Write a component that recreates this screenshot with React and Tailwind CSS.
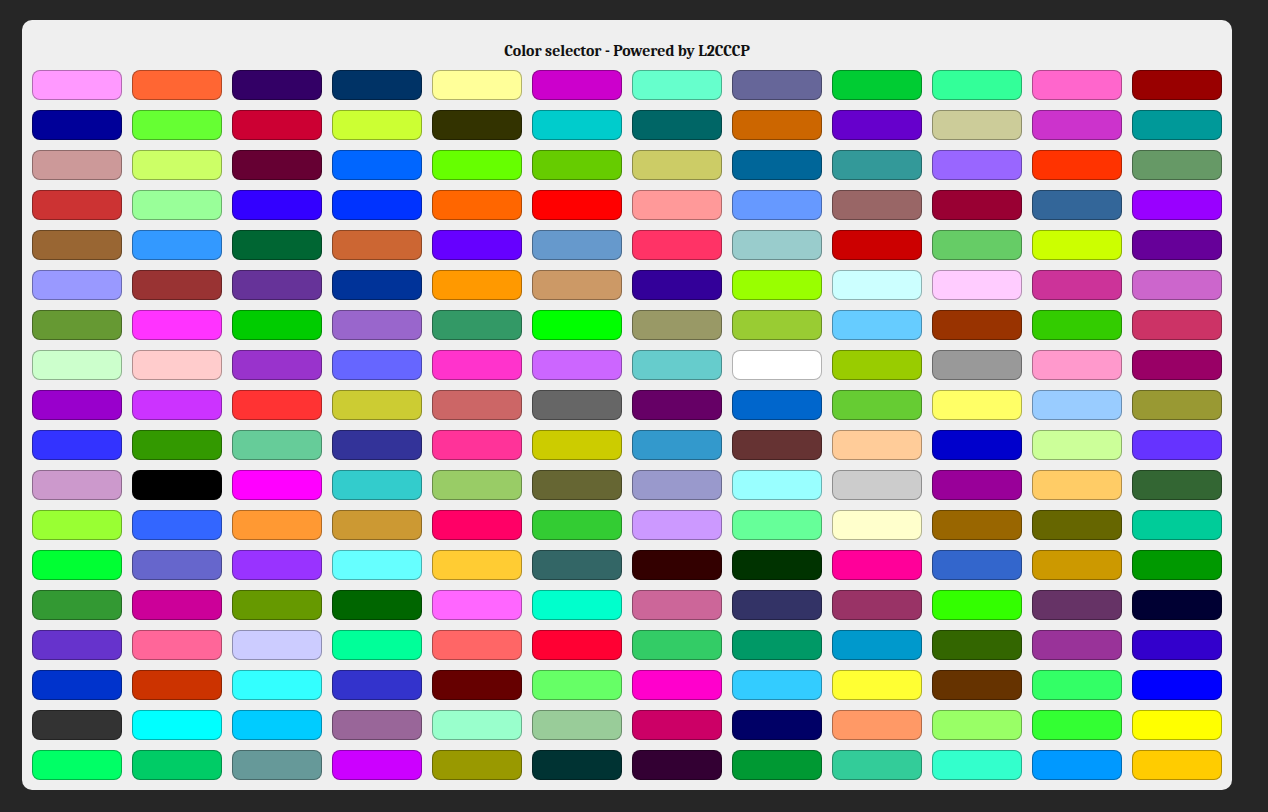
import React from 'react'

// 216 web-safe colours, in the order the selector lays them out
const COLORS = [
  '#ff99ff', '#ff6633', '#330066', '#003366', '#ffff99', '#cc00cc', '#66ffcc', '#666699', '#00cc33', '#33ff99', '#ff66cc', '#990000',
  '#000099', '#66ff33', '#cc0033', '#ccff33', '#333300', '#00cccc', '#006666', '#cc6600', '#6600cc', '#cccc99', '#cc33cc', '#009999',
  '#cc9999', '#ccff66', '#660033', '#0066ff', '#66ff00', '#66cc00', '#cccc66', '#006699', '#339999', '#9966ff', '#ff3300', '#669966',
  '#cc3333', '#99ff99', '#3300ff', '#0033ff', '#ff6600', '#ff0000', '#ff9999', '#6699ff', '#996666', '#990033', '#336699', '#9900ff',
  '#996633', '#3399ff', '#006633', '#cc6633', '#6600ff', '#6699cc', '#ff3366', '#99cccc', '#cc0000', '#66cc66', '#ccff00', '#660099',
  '#9999ff', '#993333', '#663399', '#003399', '#ff9900', '#cc9966', '#330099', '#99ff00', '#ccffff', '#ffccff', '#cc3399', '#cc66cc',
  '#669933', '#ff33ff', '#00cc00', '#9966cc', '#339966', '#00ff00', '#999966', '#99cc33', '#66ccff', '#993300', '#33cc00', '#cc3366',
  '#ccffcc', '#ffcccc', '#9933cc', '#6666ff', '#ff33cc', '#cc66ff', '#66cccc', '#ffffff', '#99cc00', '#999999', '#ff99cc', '#990066',
  '#9900cc', '#cc33ff', '#ff3333', '#cccc33', '#cc6666', '#666666', '#660066', '#0066cc', '#66cc33', '#ffff66', '#99ccff', '#999933',
  '#3333ff', '#339900', '#66cc99', '#333399', '#ff3399', '#cccc00', '#3399cc', '#663333', '#ffcc99', '#0000cc', '#ccff99', '#6633ff',
  '#cc99cc', '#000000', '#ff00ff', '#33cccc', '#99cc66', '#666633', '#9999cc', '#99ffff', '#cccccc', '#990099', '#ffcc66', '#336633',
  '#99ff33', '#3366ff', '#ff9933', '#cc9933', '#ff0066', '#33cc33', '#cc99ff', '#66ff99', '#ffffcc', '#996600', '#666600', '#00cc99',
  '#00ff33', '#6666cc', '#9933ff', '#66ffff', '#ffcc33', '#336666', '#330000', '#003300', '#ff0099', '#3366cc', '#cc9900', '#009900',
  '#339933', '#cc0099', '#669900', '#006600', '#ff66ff', '#00ffcc', '#cc6699', '#333366', '#993366', '#33ff00', '#663366', '#000033',
  '#6633cc', '#ff6699', '#ccccff', '#00ff99', '#ff6666', '#ff0033', '#33cc66', '#009966', '#0099cc', '#336600', '#993399', '#3300cc',
  '#0033cc', '#cc3300', '#33ffff', '#3333cc', '#660000', '#66ff66', '#ff00cc', '#33ccff', '#ffff33', '#663300', '#33ff66', '#0000ff',
  '#333333', '#00ffff', '#00ccff', '#996699', '#99ffcc', '#99cc99', '#cc0066', '#000066', '#ff9966', '#99ff66', '#33ff33', '#ffff00',
  '#00ff66', '#00cc66', '#669999', '#cc00ff', '#999900', '#003333', '#330033', '#009933', '#33cc99', '#33ffcc', '#0099ff', '#ffcc00',
]

const Swatch = ({ color }) => (
  <button
    type="button"
    title={color}
    className="h-[30px] rounded-lg border border-black/30 cursor-pointer"
    style={{ backgroundColor: color }}
  />
)

const App = () => {
  return (
    <div className="min-h-screen bg-[#262626] pt-[20px] pl-[22px]">
      <div className="w-[1210px] bg-[#efefef] rounded-[10px] px-[10px] pb-[10px]">
        {/* Header */}
        <div className="h-[50px] pt-[22px] text-center">
          <h1 className="text-[15.8px] leading-[18px] font-bold text-[#111]" style={{ fontFamily: 'Cambria, "Liberation Serif", "DejaVu Serif", serif' }}>
            Color selector - Powered by L2CCCP
          </h1>
        </div>

        {/* Palette */}
        <div className="grid grid-cols-12 gap-[10px]">
          {COLORS.map((c, i) => (
            <Swatch key={i} color={c} />
          ))}
        </div>
      </div>
    </div>
  )
}

export default App
